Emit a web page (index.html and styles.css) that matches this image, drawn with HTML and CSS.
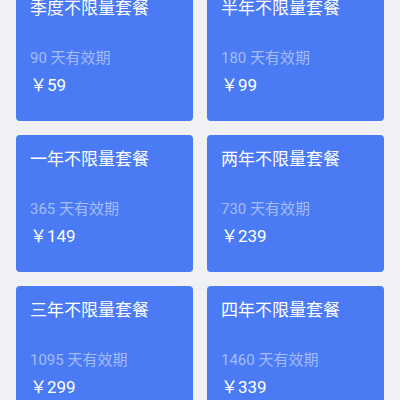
FILE: index.html
```html
<!DOCTYPE html>
<html>
<head>
	<meta charset="utf-8">
	<title>套餐列表</title>
	<link rel="stylesheet" href="styles.css">
</head>
<body>

<div class="plans">
	<div class="plan">
		<p class="plan-name">季度不限量套餐</p>
		<p class="plan-days">90 天有效期</p>
		<p class="plan-price">￥59</p>
	</div>
	<div class="plan">
		<p class="plan-name">半年不限量套餐</p>
		<p class="plan-days">180 天有效期</p>
		<p class="plan-price">￥99</p>
	</div>
	<div class="plan">
		<p class="plan-name">一年不限量套餐</p>
		<p class="plan-days">365 天有效期</p>
		<p class="plan-price">￥149</p>
	</div>
	<div class="plan">
		<p class="plan-name">两年不限量套餐</p>
		<p class="plan-days">730 天有效期</p>
		<p class="plan-price">￥239</p>
	</div>
	<div class="plan">
		<p class="plan-name">三年不限量套餐</p>
		<p class="plan-days">1095 天有效期</p>
		<p class="plan-price">￥299</p>
	</div>
	<div class="plan">
		<p class="plan-name">四年不限量套餐</p>
		<p class="plan-days">1460 天有效期</p>
		<p class="plan-price">￥339</p>
	</div>
</div>

</body>
</html>
```

FILE: styles.css
```css
* {
	margin: 0;
	padding: 0;
}
body {
	background: #f0f1f5;
	font-family: Roboto, "Noto Sans CJK SC", sans-serif;
	overflow: hidden;
}
/* list is scrolled a little, first row sits partly above the fold */
.plans {
	display: grid;
	grid-template-columns: 1fr 1fr;
	gap: 14px;
	padding: 0 16px 16px;
	margin-top: -16px;
}
.plan {
	height: 137px;
	box-sizing: border-box;
	padding: 12px 14px 0;
	background: #4a7af4;
	border-radius: 4px;
	color: #fff;
}
.plan-name {
	font-size: 17px;
	line-height: 24px;
}
.plan-days {
	margin-top: 27px;
	font-size: 15px;
	line-height: 22px;
	color: rgba(255, 255, 255, .5);
}
.plan-price {
	margin-top: 4px;
	font-size: 17px;
	line-height: 24px;
}
```
